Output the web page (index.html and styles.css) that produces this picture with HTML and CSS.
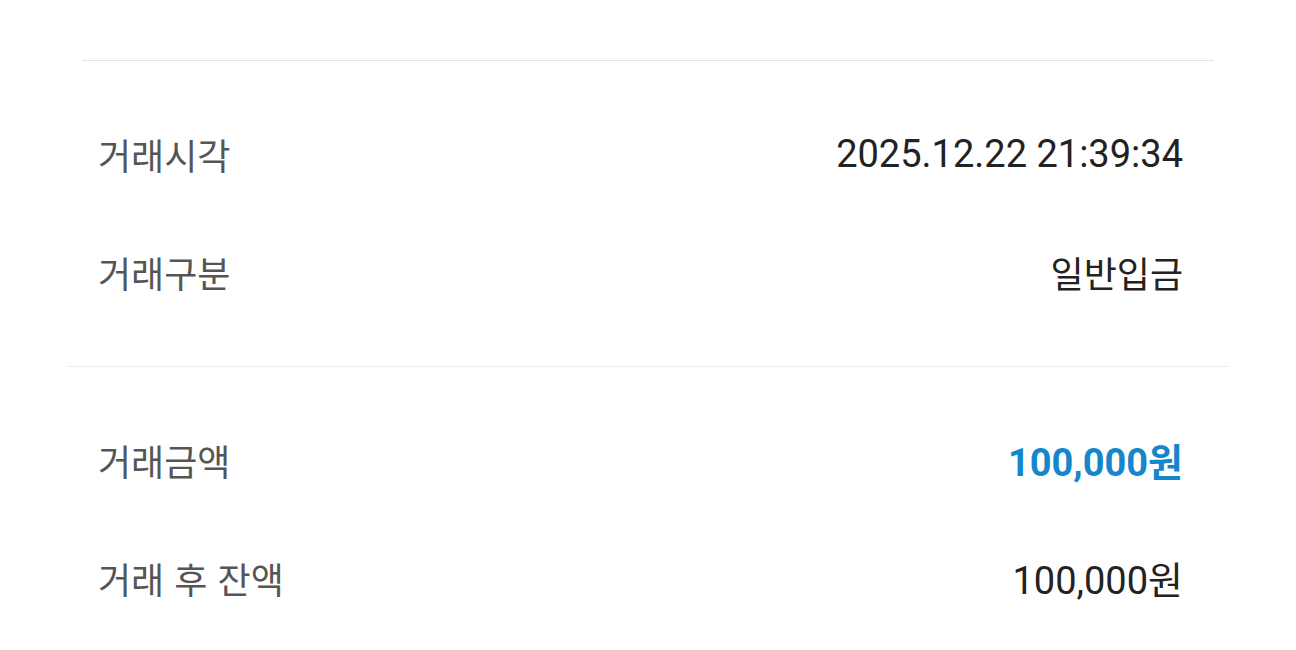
FILE: index.html
```html
<!DOCTYPE html>
<html lang="ko">
<head>
    <meta charset="UTF-8">
    <meta name="viewport" content="width=device-width, initial-scale=1.0">
    <title>거래내역 상세</title>
    <link rel="stylesheet" href="styles.css">
</head>
<body>
    <section class="detail">
        <div class="detail-group first">
            <div class="detail-row">
                <span class="label">거래시각</span>
                <span class="value">2025.12.22 21:39:34</span>
            </div>
            <div class="detail-row">
                <span class="label">거래구분</span>
                <span class="value text">일반입금</span>
            </div>
        </div>

        <div class="detail-group">
            <div class="detail-row">
                <span class="label">거래금액</span>
                <span class="value amount">100,000원</span>
            </div>
            <div class="detail-row">
                <span class="label">거래 후 잔액</span>
                <span class="value">100,000원</span>
            </div>
        </div>
    </section>
</body>
</html>
```

FILE: styles.css
```css
body {
    margin: 0;
    background: #fff;
    font-family: Roboto, "Noto Sans CJK KR", sans-serif;
    overflow: hidden;
}

.detail {
    margin: 0 68px;
    padding-top: 60px;
}

.detail-group {
    padding: 35px 0 34px;
    border-top: 1px solid #ececec;
}

.detail-group.first {
    margin: 0 14px;
    border-top-color: #e3e3e3;
}

.detail-group.first .detail-row {
    padding: 0 31px 0 16px;
}

.detail-row {
    display: flex;
    justify-content: space-between;
    align-items: center;
    height: 118px;
    padding: 0 45px 0 30px;
}

.label {
    font-family: "Noto Sans CJK KR", sans-serif;
    font-size: 36px;
    color: #555;
    margin-top: -3px;
}

.value {
    font-size: 38px;
    color: #222;
    margin-top: -3px;
}

.value.text {
    font-family: "Noto Sans CJK KR", sans-serif;
    font-size: 36px;
}

.amount {
    color: #1487cc;
    font-weight: bold;
}
```
